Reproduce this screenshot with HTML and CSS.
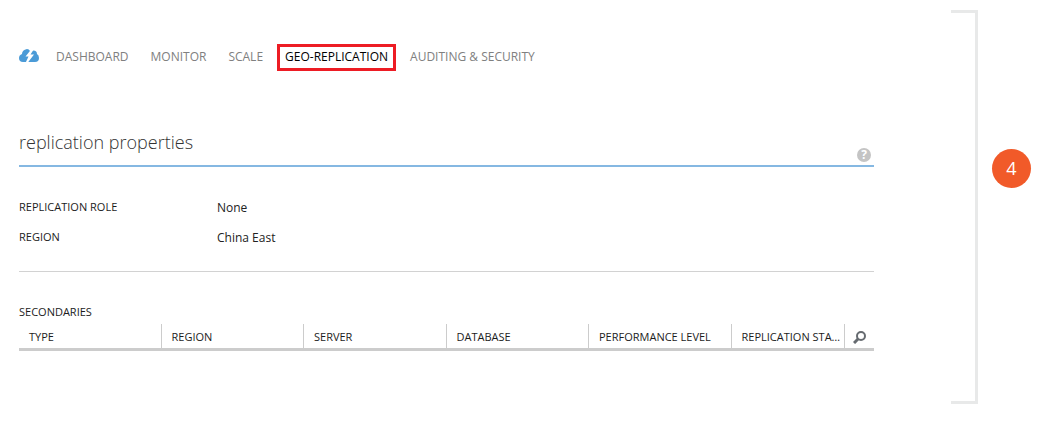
FILE: index.html
```html
<!DOCTYPE html>
<html lang="en">
<head>
<meta charset="utf-8">
<title>Geo-replication</title>
<link rel="stylesheet" href="styles.css">
</head>
<body>
<div class="page">
  <main class="content">
    <nav class="tabs" aria-label="Database sections">
      <svg class="logo" viewBox="0 0 20 14" aria-hidden="true">
        <path class="cloud" d="M4 13A4 4 0 0 1 0 9Q0 6 3 5Q3 1 8 0Q10 0 11 2Q18 0 18 5Q20 6 20 9A4 4 0 0 1 16 13Z"/>
        <path class="bolt" d="M12.500 0L6.500 7.500H9.500L6.500 14H8.500L15 5.500H11.500L15 0Z"/>
      </svg>
      <a class="tab" href="#dashboard">DASHBOARD</a>
      <a class="tab" href="#monitor">MONITOR</a>
      <a class="tab" href="#scale">SCALE</a>
      <a class="tab active" href="#geo" aria-current="page">GEO-REPLICATION</a>
      <a class="tab" href="#auditing">AUDITING &amp; SECURITY</a>
    </nav>
    <header class="heading">
      <h1>replication properties</h1>
      <button class="help" type="button" aria-label="Help">?</button>
    </header>
    <dl class="properties">
      <dt>REPLICATION ROLE</dt><dd>None</dd>
      <dt>REGION</dt><dd>China East</dd>
    </dl>
    <h2 id="secondaries">SECONDARIES</h2>
    <table class="grid" aria-labelledby="secondaries">
      <colgroup><col class="col"><col class="col"><col class="col"><col class="col"><col class="col"><col><col class="col-search"></colgroup>
      <thead>
        <tr>
          <th>TYPE</th><th>REGION</th><th>SERVER</th><th>DATABASE</th><th>PERFORMANCE LEVEL</th><th>REPLICATION STATUS</th>
          <th class="search-cell"><button class="search" type="button" aria-label="Search"><svg viewBox="0 0 13 13" aria-hidden="true"><circle cx="8" cy="5" r="4"/><path d="M5 8L1 12"/></svg></button></th>
        </tr>
      </thead>
    </table>
  </main>
  <aside class="callout">
    <div class="bracket"></div>
    <span class="step">4</span>
  </aside>
</div>
</body>
</html>
```
FILE: styles.css
```css
* { box-sizing: border-box; }
body {
  margin: 0;
  background: #fff;
  color: #333;
  font: 12px/18px "Open Sans", "Noto Sans", sans-serif;
}
button { border: 0; padding: 0; cursor: pointer; }
.page { display: flex; gap: 77px; padding: 10px 10px 28px 19px; }
.content { flex: 1; min-width: 0; padding-top: 34px; }
.tabs { display: flex; align-items: flex-start; }
.logo { width: 20px; height: 14px; margin: 5px 17px 0 0; }
.cloud { fill: #4b9bd7; }
.bolt { fill: #fff; }
.tab { margin-right: 22px; padding: 4px 0 5px; color: #808080; text-decoration: none; white-space: nowrap; }
.tab.active { margin: 0 14px 0 -8px; padding: 1px 5px 2px; border: 3px solid #ed1c24; color: #000; }
.heading {
  display: flex;
  justify-content: space-between;
  align-items: flex-end;
  margin-top: 56px;
  height: 40px;
  padding-right: 3px;
  border-bottom: 2px solid #85b8e2;
}
h1 { margin: 0 0 10px; color: #333; font-size: 18px; font-weight: 300; line-height: 26px; }
.help {
  width: 14px;
  height: 14px;
  margin-bottom: 3px;
  border-radius: 50%;
  background: #c4c4c4;
  color: #fff;
  font: bold 12px/14px "Open Sans", sans-serif;
}
.properties {
  display: grid;
  grid-template-columns: 198px 1fr;
  row-gap: 11px;
  margin: 0;
  padding: 31px 0 24px;
  border-bottom: 1px solid #d2d2d2;
}
dt, h2, th { font-size: 11px; font-weight: 500; color: #1c1c1c; }
dd { margin: 0; padding-top: 1px; color: #222; }
h2 { margin: 31px 0 3px; line-height: 18px; }
.grid { width: 100%; table-layout: fixed; border-collapse: separate; border-spacing: 0; border-bottom: 3px solid #ccc; }
.col { width: 16.667%; }
.col-search { width: 29px; }
th {
  height: 24px;
  padding: 2px 0 0 10px;
  overflow: hidden;
  border-right: 1px solid #ccc;
  text-align: left;
  text-overflow: ellipsis;
  white-space: nowrap;
}
.search-cell { padding: 3px 0 0 8px; border-right: 0; }
.search { display: block; width: 13px; height: 13px; background: none; }
.search svg { display: block; width: 13px; height: 13px; fill: none; stroke: #666b70; stroke-width: 2; }
.search path { stroke-width: 3; }
.callout { display: flex; gap: 14px; }
.bracket { width: 27px; min-height: 394px; border: 3px solid #e8e9e9; border-left: 0; }
.step {
  width: 39px;
  height: 39px;
  margin-top: 139px;
  border-radius: 50%;
  background: #f15a29;
  color: #fff;
  font-size: 18px;
  line-height: 38px;
  text-align: center;
}
```
